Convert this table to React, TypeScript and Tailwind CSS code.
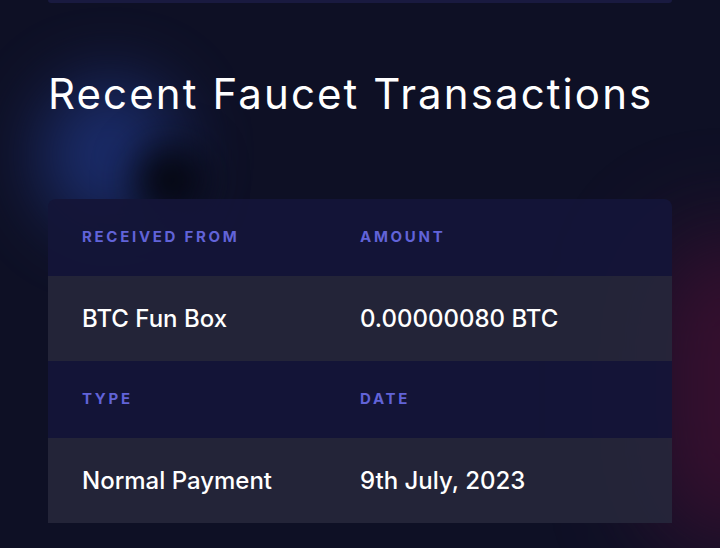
import React from 'react';

const rows = [
  { labels: ['Received From', 'Amount'], values: ['BTC Fun Box', '0.00000080 BTC'] },
  { labels: ['Type', 'Date'], values: ['Normal Payment', '9th July, 2023'] },
];

export default function App() {
  return (
    <div
      className="relative w-[720px] h-[548px] overflow-hidden bg-[#0e1025] px-12"
      style={{ fontFamily: 'Inter, "Noto Sans", sans-serif' }}
    >
      {/* Background glows */}
      <div className="pointer-events-none absolute left-[40px] top-[80px] w-[140px] h-[150px] rounded-full bg-[#1f3682] opacity-75 blur-[35px]" />
      <div className="pointer-events-none absolute left-[135px] top-[145px] w-[70px] h-[70px] rounded-full bg-[#04050d] blur-[20px]" />
      <div className="pointer-events-none absolute left-[650px] top-[230px] w-[160px] h-[320px] rounded-full bg-[#4a0f33] opacity-70 blur-[50px]" />

      {/* Card above, cut off at the top */}
      <div className="relative h-[3px] rounded-b-lg bg-[#191a40]" />

      <h2 className="relative mt-[67px] text-[42px] leading-[48px] font-normal tracking-[0.05em] text-white">
        Recent Faucet Transactions
      </h2>

      <div className="relative mt-[81px] overflow-hidden rounded-t-lg">
        {rows.map((row, i) => (
          <div key={i}>
            <div className="grid grid-cols-[278px_1fr] h-[77px] items-center bg-[#141538]/95 px-[34px]">
              {row.labels.map((label) => (
                <span
                  key={label}
                  className="text-[15px] font-bold uppercase tracking-[0.18em] text-[#6163d8]"
                >
                  {label}
                </span>
              ))}
            </div>
            <div className="grid grid-cols-[278px_1fr] h-[85px] items-center bg-[#26273b]/90 px-[34px]">
              {row.values.map((value) => (
                <span key={value} className="text-[24px] font-medium text-white">
                  {value}
                </span>
              ))}
            </div>
          </div>
        ))}
      </div>
    </div>
  );
}
